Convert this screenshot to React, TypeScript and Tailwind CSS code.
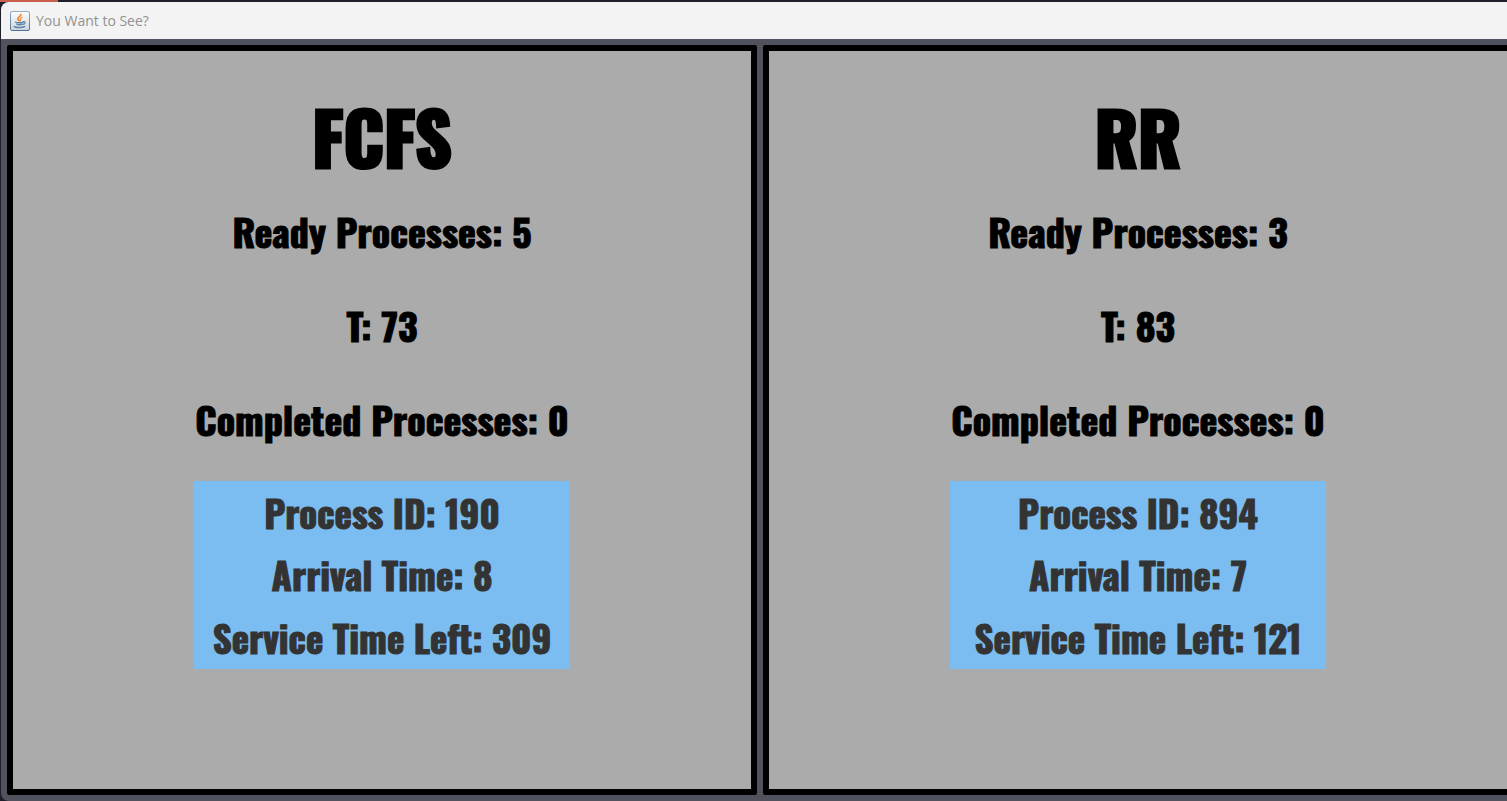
type Scheduler = {
  name: string;
  ready: number;
  time: number;
  completed: number;
  processId: number;
  arrival: number;
  serviceLeft: number;
};

const schedulers: Scheduler[] = [
  { name: "FCFS", ready: 5, time: 73, completed: 0, processId: 190, arrival: 8, serviceLeft: 309 },
  { name: "RR", ready: 3, time: 83, completed: 0, processId: 894, arrival: 7, serviceLeft: 121 },
];

function JavaIcon() {
  return (
    <svg viewBox="0 0 20 20" className="size-5 shrink-0" aria-hidden="true">
      <defs>
        <linearGradient id="tile" x1="0" y1="0" x2="0" y2="1">
          <stop offset="0" stopColor="#fdfdfe" />
          <stop offset="1" stopColor="#c9d5df" />
        </linearGradient>
        <linearGradient id="edge" x1="0" y1="0" x2="0" y2="1">
          <stop offset="0" stopColor="#8eabc7" />
          <stop offset="1" stopColor="#55718c" />
        </linearGradient>
      </defs>
      <rect x="0.5" y="0.5" width="19" height="19" rx="1.5" fill="url(#tile)" stroke="url(#edge)" />
      <g fill="none" strokeLinecap="round">
        <path d="M10.8 3.5C11.4 5.2 7.5 6 7.8 7.8C8 9 9 9.2 9.2 9.8" stroke="#ee8a35" strokeWidth="1.8" />
        <path d="M12.2 6.2C10.4 7 10 7.8 10.6 8.6C10.9 9.1 10.6 9.6 10.2 10" stroke="#ee8a35" strokeWidth="1.1" />
        <path d="M5.6 11.2C7 12 11 12 13 11.2" stroke="#5f86a6" strokeWidth="1.5" />
        <path d="M13.2 10.6C16 10.2 15.6 12.8 13 13.4" stroke="#5f86a6" strokeWidth="1.1" />
        <path d="M6.8 13.2C8 13.9 11 13.9 12.2 13.2" stroke="#5f86a6" strokeWidth="1.5" />
        <path d="M4.2 15.4C5.5 16.8 13 16.8 14.6 15.4" stroke="#5f86a6" strokeWidth="1.4" />
      </g>
    </svg>
  );
}

function SchedulerPanel({ item }: { item: Scheduler }) {
  return (
    <section className="flex min-w-0 flex-col items-center justify-center rounded-[2px] border-6 border-black bg-[#ababab] pb-20 text-[38px] leading-none font-bold whitespace-nowrap text-black [-webkit-text-stroke:1px_currentColor]">
      <h2 className="flex h-[94px] items-center pb-1 text-[72px] [-webkit-text-stroke:3px_currentColor]">{item.name}</h2>
      <p className="flex h-[94px] items-center pb-0.5">Ready Processes: {item.ready}</p>
      <p className="flex h-[94px] items-center pb-0.5">T: {item.time}</p>
      <p className="flex h-[94px] items-center pb-0.5">Completed Processes: {item.completed}</p>
      <div className="mt-3.5 grid h-[188px] w-[376px] grid-rows-3 items-center bg-[#7bbdf0] text-center text-[37px] text-[#333333]">
        <p>Process ID: {item.processId}</p>
        <p>Arrival Time: {item.arrival}</p>
        <p>Service Time Left: {item.serviceLeft}</p>
      </div>
    </section>
  );
}

export default function App() {
  return (
    <div className="flex h-screen flex-col overflow-hidden bg-[#1f1f29]">
      <div className="h-0.5 w-[58px] shrink-0 bg-[#c8604b]" />
      <main className="ml-px flex min-h-0 flex-1 flex-col overflow-hidden rounded-l-lg bg-[#50535d]">
        <header className="flex h-[37px] shrink-0 items-center gap-1.5 bg-[#f3f3f3] pl-[9px]">
          <JavaIcon />
          <h1 className="font-['Segoe_UI','Open_Sans',sans-serif] text-sm text-[#929292]">You Want to See?</h1>
        </header>
        <div className="-mr-1.5 grid min-h-0 flex-1 grid-cols-2 gap-1.5 pt-1.5 pb-1.5 pl-1.5 font-[Impact,Oswald,Anton,sans-serif]">
          {schedulers.map((item) => (
            <SchedulerPanel key={item.name} item={item} />
          ))}
        </div>
      </main>
    </div>
  );
}
